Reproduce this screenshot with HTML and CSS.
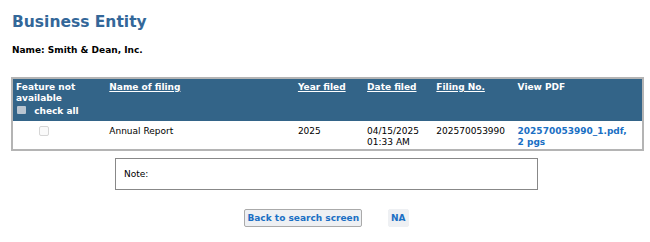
FILE: index.html
```html
<!DOCTYPE html>
<html>
<head>
  <title>Business Entity</title>
  <link rel="stylesheet" href="styles.css">
</head>
<body>
  <h1>Business Entity</h1>
  <p class="name">Name: Smith &amp; Dean, Inc.</p>

  <table class="filings">
    <colgroup>
      <col class="c-feat">
      <col class="c-name">
      <col class="c-year">
      <col class="c-date">
      <col class="c-no">
      <col class="c-pdf">
    </colgroup>
    <tr class="head">
      <th>Feature not available<br>
        <label class="checkall"><input type="checkbox" disabled> check all</label>
      </th>
      <th><a href="#">Name of filing</a></th>
      <th><a href="#">Year filed</a></th>
      <th><a href="#">Date filed</a></th>
      <th><a href="#">Filing No.</a></th>
      <th>View PDF</th>
    </tr>
    <tr class="row">
      <td class="box"><input type="checkbox" disabled></td>
      <td>Annual Report</td>
      <td>2025</td>
      <td>04/15/2025<br>01:33 AM</td>
      <td>202570053990</td>
      <td><a class="pdf" href="#">202570053990_1.pdf,<br>2 pgs</a></td>
    </tr>
  </table>

  <div class="note">Note:</div>

  <div class="actions">
    <button class="btn">Back to search screen</button>
    <button class="btn btn-na">NA</button>
  </div>
</body>
</html>
```

FILE: styles.css
```css
body {
  font-family: "DejaVu Sans", Verdana, sans-serif;
  font-size: 9px;
  margin: 0;
  padding: 10px 10px;
  color: #000;
  background: #fff;
}

h1 {
  font-size: 15.5px;
  color: #336799;
  margin: 2px 0 0 2px;
  line-height: 20px;
}

.name {
  font-weight: bold;
  margin: 13px 0 0 2px;
}

.filings {
  width: 633px;
  margin-top: 22px;
  margin-left: 1px;
  table-layout: fixed;
  border-collapse: collapse;
  border: 2px solid #b4b4b4;
}

.filings th {
  background: #336488;
  color: #fff;
  text-align: left;
  vertical-align: top;
  font-weight: bold;
  padding: 3px 3px 4px 3px;
  line-height: 11px;
}

.filings th a {
  color: #fff;
}

.filings td {
  vertical-align: top;
  padding: 5px 3px 1px 3px;
  line-height: 11px;
}

.c-feat { width: 94px; }
.c-name { width: 188px; }
.c-year { width: 69px; }
.c-date { width: 69px; }
.c-no { width: 81px; }
.c-pdf { width: 128px; }

.filings td.box { padding-left: 26px; }

.checkall {
  display: inline-block;
  margin-top: 2px;
}

.checkall input {
  appearance: none;
  margin: 0 5px 0 1px;
  width: 9px;
  height: 8px;
  vertical-align: top;
  background: #b9c5d1;
  border: none;
  border-radius: 1px;
}

.row input {
  appearance: none;
  margin: 0;
  width: 10px;
  height: 10px;
  background: #fafafa;
  border: 1px solid #d6d6d6;
  border-radius: 2px;
}

.pdf {
  color: #1a6fc4;
  font-weight: bold;
  text-decoration: none;
}

.note {
  margin: 7px 0 0 105px;
  width: 405px;
  border: 1px solid #888;
  padding: 10px 8px 10px 8px;
}

.actions {
  display: flex;
  justify-content: center;
  gap: 26px;
  margin-top: 19px;
  margin-left: 3px;
}

.btn {
  font-family: "DejaVu Sans", Verdana, sans-serif;
  font-size: 9px;
  font-weight: bold;
  color: #1a6fc4;
  background: #eef0f3;
  border: 1px solid #aaa;
  border-radius: 2px;
  padding: 3px 2px;
  line-height: 10px;
}

.btn-na {
  border-color: #eef0f3;
}
```
